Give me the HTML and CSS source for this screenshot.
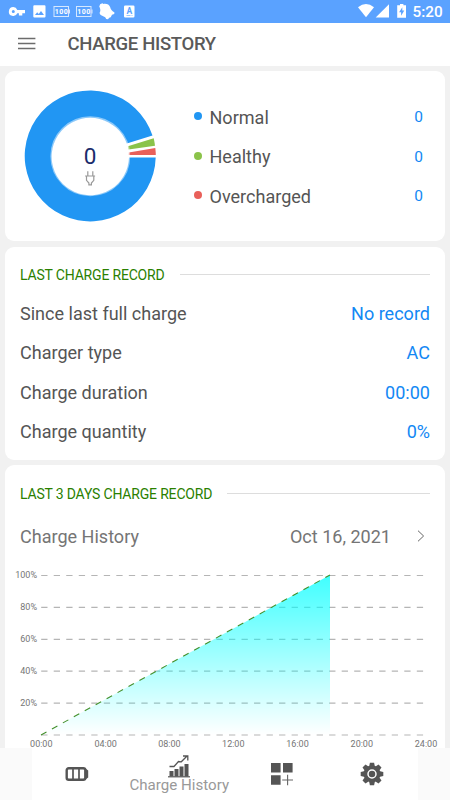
FILE: index.html
```html
<!DOCTYPE html>
<html lang="en">
<head>
<meta charset="utf-8">
<title>Charge History</title>
<link rel="stylesheet" href="styles.css">
</head>
<body>
<div class="screen">
  <div class="status">
    <svg class="status-icons" width="140" height="22" viewBox="0 0 140 22" fill="#fff">
      <path fill-rule="evenodd" d="M13.300 7.100a4.400 4.400 0 1 0 4 6.100h1.600v2.400h3.400v-2.400H25V9.900h-7.700a4.400 4.400 0 0 0-4-2.800zm0 3a1.500 1.500 0 1 1 0 3 1.500 1.500 0 0 1 0-3z"/>
      <path fill-rule="evenodd" d="M34.300 5.200h10.200q1 0 1 1v10.200q0 1-1 1H34.300q-1 0-1-1V6.200q0-1 1-1zM35 15h9l-3-4-2.300 3-1.500-1.700z"/>
      <g fill="none" stroke="#fff" stroke-opacity=".75">
        <rect x="54" y="6.500" width="14.500" height="10"/><path d="M69.500 9.500v4"/>
        <rect x="76.500" y="6.500" width="14.500" height="10"/><path d="M92 9.500v4"/>
      </g>
      <text class="mini" x="54.800" y="14" textLength="13">100</text>
      <text class="mini" x="77.300" y="14" textLength="13">100</text>
      <path d="M99.300 6.500l.8-2.300 2.200-.9 1.200.6c3-.5 5.800.5 6.700 3.300.5 2 1.500 3.500 4.300 5.300l-.3 1.500-2.200.7-1.300 2.500-1.500.5-1.200 1.600-1.800-.2-1-1.800-4.500-2.200-.8-1.200-.3-1.200.5-1c.6-1.500.1-3.500-.9-5.200z"/>
      <path d="M125.200 5.500h8.100q1.200 0 1.200 1.200v9.600q0 1.200-1.200 1.200h-8.100q-1.200 0-1.200-1.200V6.700q0-1.200 1.200-1.200z"/>
      <text class="letter" x="126.600" y="13.700">A</text>
      <path d="M126.500 15.500h6" stroke="#5aa2ff" stroke-width=".6" stroke-dasharray="4 1"/>
    </svg>
    <svg class="signal-icons" width="50" height="22" viewBox="0 0 50 22" fill="#fff">
      <path d="M0 7.200Q8 1 16 7.200L8 17.300z"/>
      <path d="M31 4.300v13.200H17.700z"/>
      <path fill-rule="evenodd" d="M42 3.900h3.400v1.300H48v12.500h-8.800V5.200H42zM44.300 7.200l-3.200 5h2v3.500l3.200-5.200h-2z"/>
    </svg>
    <span class="time">5:20</span>
  </div>

  <header class="bar">
    <svg width="18" height="14" viewBox="0 0 18 14" stroke="#6c6c6c" stroke-width="1.700"><path d="M0 1.500h17.400M0 6.500h17.400M0 11.500h17.400"/></svg>
    <h1>CHARGE HISTORY</h1>
  </header>

  <main>
    <section class="card summary">
      <svg class="donut" width="132" height="132" viewBox="-66.300 -66.300 132 132">
        <path fill="#2196f3" d="M65.400 1.300A65.500 65.500 0 1 1 62.200-20.700L36.500-12.700A38.700 38.700 0 1 0 38.700 1.300z"/>
        <path fill="#8bc34a" d="M63.400-18.100A65.500 65.500 0 0 1 64.700-10.500L38.200-6.900 37.600-10z"/>
        <path fill="#e9605a" d="M65-8.300A65.500 65.500 0 0 1 65.500-1.200H38.500V-3.800z"/>
        <circle r="39" fill="none" stroke="#fff" stroke-opacity=".48" stroke-width="1.900"/>
        <text class="count" x="-.3" y="7.200" text-anchor="middle">0</text>
        <path d="M-2.500 15v4.500M2.500 15v4.500M-5.200 19.700H4.800M-3.800 20v4l2.400 2.700v1.800H1.100v-1.800L3.500 24v-4" fill="none" stroke="#999" stroke-width="1.200"/>
      </svg>
      <ul class="legend">
        <li><i class="dot blue"></i><span>Normal</span><b>0</b></li>
        <li><i class="dot green"></i><span>Healthy</span><b>0</b></li>
        <li><i class="dot red"></i><span>Overcharged</span><b>0</b></li>
      </ul>
    </section>

    <section class="card record">
      <h2><span>LAST CHARGE RECORD</span></h2>
      <dl>
        <div><dt>Since last full charge</dt><dd>No record</dd></div>
        <div><dt>Charger type</dt><dd>AC</dd></div>
        <div><dt>Charge duration</dt><dd>00:00</dd></div>
        <div><dt>Charge quantity</dt><dd>0%</dd></div>
      </dl>
    </section>

    <section class="card history">
      <h2><span>LAST 3 DAYS CHARGE RECORD</span></h2>
      <div class="day">
        <span>Charge History</span><span class="date">Oct 16, 2021</span>
        <svg width="8" height="12" viewBox="0 0 8 12" fill="none" stroke="#666"><path d="M1 .7l5.600 5.300L1 11.300"/></svg>
      </div>
      <svg class="chart" width="440" height="190" viewBox="5 560 440 190">
        <defs><linearGradient id="fade" x1="0" y1="0" x2="0" y2="1"><stop offset="0" stop-color="#0ff" stop-opacity=".75"/><stop offset="1" stop-color="#0ff" stop-opacity="0"/></linearGradient></defs>
        <path class="grid" d="M41.200 575.500H424M41.200 607.400H424M41.200 639.300H424M41.200 671.200H424M41.200 703.100H424M41.200 735H424"/>
        <path fill="url(#fade)" d="M41 735L330 575V735z"/>
        <path d="M41 735L330 575" fill="none" stroke="#43902c" stroke-width="1.100" stroke-dasharray="6.250 6.250"/>
        <g class="axis" text-anchor="end">
          <text x="37" y="578.300">100%</text><text x="37" y="610.200">80%</text><text x="37" y="642.100">60%</text><text x="37" y="674">40%</text><text x="37" y="705.900">20%</text>
        </g>
        <g class="axis" text-anchor="middle">
          <text x="41.300" y="746.700">00:00</text><text x="105.600" y="746.700">04:00</text><text x="169.400" y="746.700">08:00</text><text x="233.300" y="746.700">12:00</text><text x="297.500" y="746.700">16:00</text><text x="361.800" y="746.700">20:00</text><text x="426" y="746.700">24:00</text>
        </g>
      </svg>
    </section>
  </main>

  <nav class="tabs">
    <div class="tabs-inner">
      <a><svg width="24" height="16" viewBox="0 0 24 16"><rect x="1.700" y="2.200" width="18.600" height="11.600" rx="2" fill="none" stroke="#555" stroke-width="2.400"/><path d="M8 2v12M14 2v12" stroke="#555" stroke-width="1.700"/><path d="M20.500 2.500l2.700 2v7l-2.700 2z" fill="#555"/></svg></a>
      <a class="active"><svg width="24" height="23" viewBox="0 0 24 23"><path d="M1 21.800h22" stroke="#555" stroke-width="1.200"/><path fill="#555" d="M2.500 16h4v5.500h-4zM7.500 14h4v7.500h-4zM12.500 11.500h4v10h-4zM17.500 9h4v12.500h-4z"/><path d="M2.500 11.500H7l4.500-5 2.800.3 6-6M16 1h4.800v4.600" fill="none" stroke="#555" stroke-width="1.300"/></svg><span>Charge History</span></a>
      <a><svg width="24" height="24" viewBox="0 0 24 24"><path fill="#555" d="M1 1h9.600v9.600H1zM13 1h9.600v9.600H13zM1 13.200h9.600v9.600H1z"/><path d="M12.200 18h10.800M17.600 12.700v10.600" stroke="#666" stroke-width="1.100"/></svg></a>
      <a><svg width="24" height="24" viewBox="-12 -12 24 24"><g fill="#555"><circle r="8.500"/><path id="tooth" d="M-2.700-8.200l.6-3.100H2.100l.6 3.100V8.200l-.6 3.100H-2.100L-2.700 8.200z"/><use href="#tooth" transform="rotate(45)"/><use href="#tooth" transform="rotate(90)"/><use href="#tooth" transform="rotate(135)"/></g><circle r="4" fill="#555" stroke="#fff" stroke-width="1.500"/></svg></a>
    </div>
  </nav>
</div>
</body>
</html>
```
FILE: styles.css
```css
* { box-sizing: border-box; margin: 0; padding: 0; }
body { font-family: Roboto, "Liberation Sans", sans-serif; color: #555; background: #f1f1f1; }
svg { display: block; flex: none; }
.screen { width: 450px; height: 800px; overflow: hidden; display: flex; flex-direction: column; }
.status { flex: none; height: 22.500px; background: #5aa2ff; display: flex; align-items: flex-start; color: #fff; }
.signal-icons { margin-left: 218px; }
.mini { font-size: 7px; font-weight: 700; }
.letter { font-size: 8.500px; font-weight: 700; fill: #5aa2ff; }
.time { margin-left: 4.500px; font-size: 15.300px; font-weight: 500; line-height: 24px; }
.bar { flex: none; height: 43px; background: #fff; display: flex; align-items: center; padding-left: 17.500px; }
.bar h1 { margin-left: 32px; font-size: 18.500px; font-weight: 500; letter-spacing: -.32px; color: #5a5a5a; }
main { flex: 1; min-height: 0; overflow: hidden; display: flex; flex-direction: column; gap: 5.500px; padding: 5px 5px 0; }
.card { flex: none; background: #fff; border-radius: 9px; }
.summary { height: 170.500px; display: flex; padding: 19.500px 22px 0 19px; }
.legend { flex: 1; list-style: none; margin-left: 38px; padding-top: 7.800px; }
.legend li { height: 39.400px; display: flex; align-items: center; font-size: 18.050px; }
.dot { width: 8px; height: 8px; border-radius: 50%; margin-right: 7.500px; position: relative; top: -1px; }
.blue { background: #2196f3; }
.green { background: #8bc34a; }
.red { background: #e9605a; }
.legend b { margin-left: auto; font-weight: 400; font-size: 15.500px; color: #1388f4; }
.count { font-size: 22.500px; fill: #1a2c6b; }
.record { height: 213px; padding: 18px 15px 0; }
h2 { height: 20px; display: flex; align-items: center; gap: 15px; font-size: 14px; font-weight: 400; letter-spacing: -.18px; color: #2a8000; white-space: nowrap; }
h2::after { content: ""; flex: 1; height: 1px; background: #ddd; }
dl { padding-top: 9.300px; }
dl div { height: 39.400px; display: flex; justify-content: space-between; align-items: center; font-size: 18.050px; }
dd { color: #1388f4; }
.history { height: 300px; padding-top: 18.500px; }
.history h2, .day { margin: 0 15px; }
.day { height: 24px; margin-top: 20.500px; display: flex; align-items: center; font-size: 18.050px; color: #757575; }
.date { margin-left: auto; margin-right: 26px; }
.day svg { margin-right: 5px; }
.chart { margin-top: 12px; }
.grid { fill: none; stroke: #b5b5b5; stroke-width: 1.200; stroke-dasharray: 6.300 6.220; }
.axis { font-size: 9px; fill: #757575; }
.tabs { flex: none; height: 52px; background: #fafafa; padding: 0 32px; }
.tabs-inner { height: 100%; width: 386px; background: #fff; display: flex; }
.tabs a { display: flex; flex-direction: column; align-items: center; justify-content: center; padding-bottom: 1px; }
.tabs a:first-child { width: 90px; }
.tabs a:nth-child(2) { width: 114.500px; }
.tabs a:nth-child(3) { width: 90px; }
.tabs a:last-child { width: 91px; }
.tabs .active { justify-content: flex-start; padding-top: 6.500px; font-size: 15.100px; line-height: 15px; color: #999; white-space: nowrap; }
```
